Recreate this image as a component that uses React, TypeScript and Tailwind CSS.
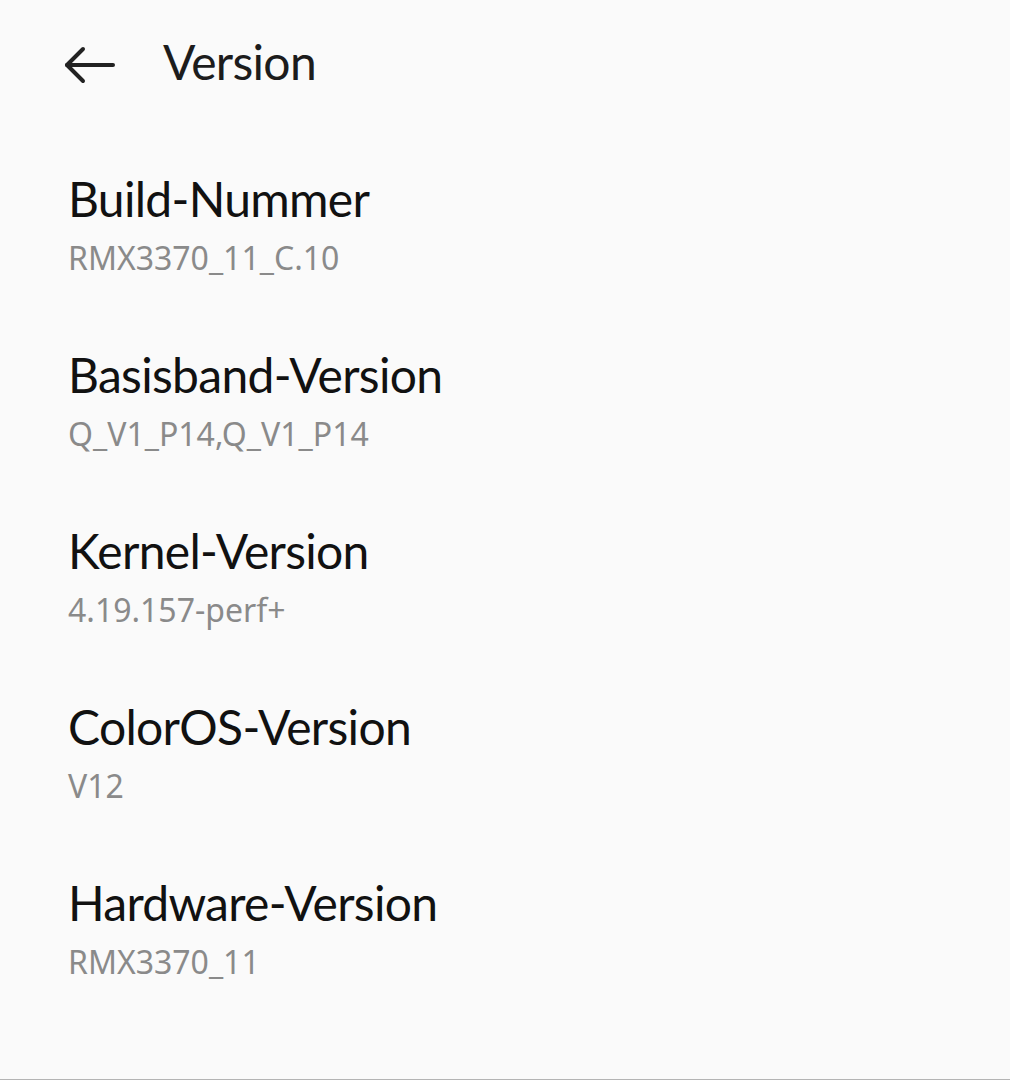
const rows = [
  { title: "Build-Nummer", value: "RMX3370_11_C.10" },
  { title: "Basisband-Version", value: "Q_V1_P14,Q_V1_P14" },
  { title: "Kernel-Version", value: "4.19.157-perf+" },
  { title: "ColorOS-Version", value: "V12" },
  { title: "Hardware-Version", value: "RMX3370_11" },
];

export default function App() {
  return (
    <div className="flex h-[1080px] w-full flex-col overflow-hidden border-b border-[#b4b4b4] bg-[#fafafa] font-['Noto_Sans',sans-serif]">
      <header className="flex h-[124px] shrink-0 items-center">
        <button type="button" aria-label="Zurück" className="ml-[64px] mt-[6px] flex h-[38px] w-[52px] items-center">
          <svg width="52" height="38" viewBox="0 0 52 38" fill="none" stroke="#222" strokeWidth="4" strokeLinecap="round" strokeLinejoin="round">
            <path d="M3 19h46" />
            <path d="M19 3L3 19l16 16" />
          </svg>
        </button>
        <h1 className="ml-[47px] font-['Lato',sans-serif] text-[48px] leading-[56px] font-normal tracking-[-0.7px] text-[#1c1c1c]">Version</h1>
      </header>

      <div className="flex flex-col pt-[47px]">
        {rows.map((row) => (
          <div key={row.title} className="mb-[69px] flex flex-col pl-[68px]">
            <div className="font-['Lato',sans-serif] text-[48px] leading-[56px] tracking-[-0.7px] text-[#111]">{row.title}</div>
            <div className="mt-[11px] text-[32px] leading-[40px] text-[#8a8a8a]">{row.value}</div>
          </div>
        ))}
      </div>
    </div>
  );
}
